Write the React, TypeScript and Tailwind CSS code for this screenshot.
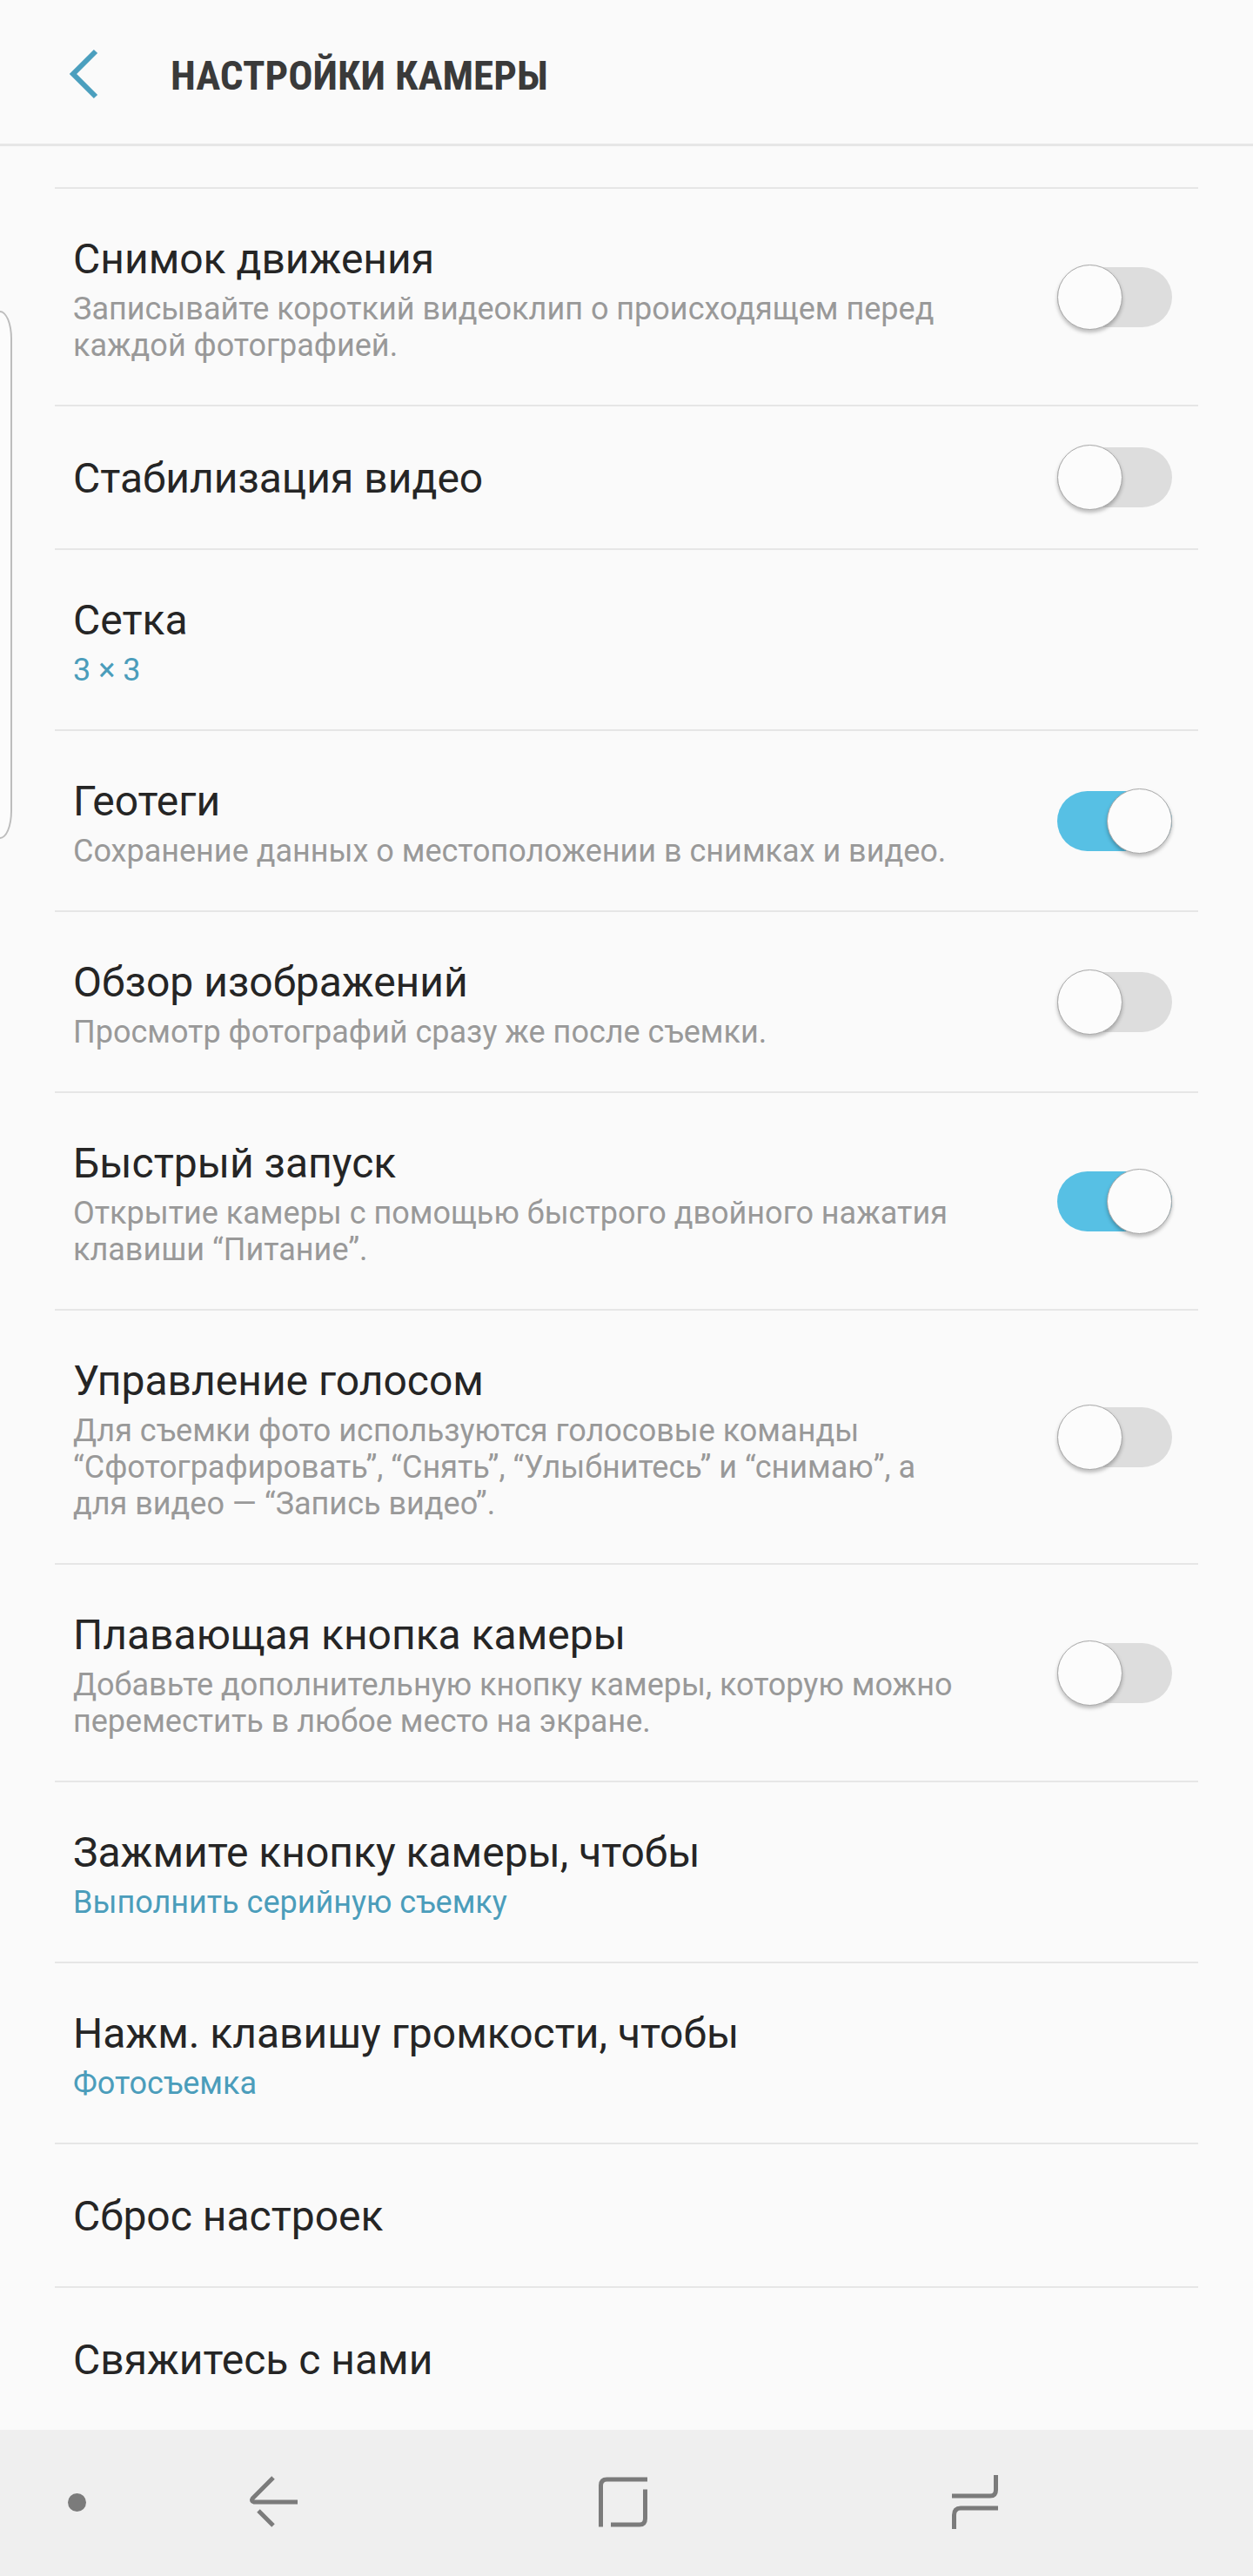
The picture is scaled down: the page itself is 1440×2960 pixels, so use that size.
import { useState } from 'react';
import clsx from 'clsx';

interface Setting {
  id: string;
  title: string;
  description?: string;
  value?: string;
  toggle?: boolean;
  enabled?: boolean;
}

const SETTINGS: Setting[] = [
  {
    id: 'motion-photo',
    title: 'Снимок движения',
    description: 'Записывайте короткий видеоклип о происходящем перед каждой фотографией.',
    toggle: true,
  },
  { id: 'stabilization', title: 'Стабилизация видео', toggle: true },
  { id: 'grid', title: 'Сетка', value: '3 × 3' },
  {
    id: 'geotags',
    title: 'Геотеги',
    description: 'Сохранение данных о местоположении в снимках и видео.',
    toggle: true,
    enabled: true,
  },
  {
    id: 'review',
    title: 'Обзор изображений',
    description: 'Просмотр фотографий сразу же после съемки.',
    toggle: true,
  },
  {
    id: 'quick-launch',
    title: 'Быстрый запуск',
    description: 'Открытие камеры с помощью быстрого двойного нажатия клавиши “Питание”.',
    toggle: true,
    enabled: true,
  },
  {
    id: 'voice',
    title: 'Управление голосом',
    description:
      'Для съемки фото используются голосовые команды “Сфотографировать”, “Снять”, “Улыбнитесь” и “снимаю”, а для видео — “Запись видео”.',
    toggle: true,
  },
  {
    id: 'floating-button',
    title: 'Плавающая кнопка камеры',
    description:
      'Добавьте дополнительную кнопку камеры, которую можно переместить в любое место на экране.',
    toggle: true,
  },
  { id: 'hold-button', title: 'Зажмите кнопку камеры, чтобы', value: 'Выполнить серийную съемку' },
  { id: 'volume-key', title: 'Нажм. клавишу громкости, чтобы', value: 'Фотосъемка' },
  { id: 'reset', title: 'Сброс настроек' },
  { id: 'contact', title: 'Свяжитесь с нами' },
];

function Switch({ id, checked, onChange }: { id: string; checked: boolean; onChange: () => void }) {
  return (
    <input
      id={id}
      type="checkbox"
      role="switch"
      checked={checked}
      onChange={onChange}
      className={clsx(
        'relative h-[75px] w-[132px] shrink-0 cursor-pointer appearance-none',
        'before:absolute before:inset-x-0 before:inset-y-[3px] before:rounded-full before:bg-[#dddddd] checked:before:bg-[#57c0e4]',
        'after:absolute after:left-0 after:top-0 after:size-[75px] after:rounded-full after:border after:border-[#a8a8a8] after:bg-[#fcfcfc] after:shadow-[0_3px_4px_rgba(0,0,0,0.25)]',
        'checked:after:left-auto checked:after:right-0'
      )}
    />
  );
}

function SettingText({ setting }: { setting: Setting }) {
  const { title, description, value } = setting;

  return (
    <span className="block min-w-0 flex-1">
      <span className="block text-5xl leading-[56px] text-[#252525]">{title}</span>
      {description && (
        <span className="mt-2 block text-4xl leading-[42px] text-[#999999]">{description}</span>
      )}
      {value && <span className="mt-2 block text-4xl leading-[42px] text-[#4b9dbb]">{value}</span>}
    </span>
  );
}

function SettingRow({ setting }: { setting: Setting }) {
  const [enabled, setEnabled] = useState(Boolean(setting.enabled));
  const hasDetails = setting.description || setting.value;
  const rowClass = clsx(
    'flex w-full items-center text-left',
    hasDetails ? 'pt-[53px] pb-[47px]' : 'pt-[55px] pb-[52px]'
  );

  if (!setting.toggle) {
    return (
      <button type="button" className={clsx(rowClass, 'px-[21px]')}>
        <SettingText setting={setting} />
      </button>
    );
  }

  return (
    <div className="flex items-center pr-[30px] pl-[21px]">
      <label htmlFor={setting.id} className={clsx(rowClass, 'min-w-0 flex-1 pr-[100px]')}>
        <SettingText setting={setting} />
      </label>
      <Switch id={setting.id} checked={enabled} onChange={() => setEnabled(!enabled)} />
    </div>
  );
}

function NavBar() {
  return (
    <nav className="flex h-[168px] bg-[#efefef] pr-[118px] pb-0.5 text-[#7b7b7b]">
      <button
        type="button"
        aria-label="Скрыть панель"
        className="flex w-[114px] items-center justify-center pl-[62px]"
      >
        <span className="size-[21px] rounded-full bg-current" />
      </button>
      <button type="button" aria-label="Назад" className="flex flex-1 items-center justify-center">
        <svg width="64" height="64" viewBox="0 0 64 64" fill="none" stroke="currentColor" strokeWidth="5">
          <path d="M31 4 L7.500 27.500 Q5 31 9 32 H59" />
          <path d="M14 42 L31 59" />
        </svg>
      </button>
      <button type="button" aria-label="Главный экран" className="flex flex-1 items-center justify-center">
        <svg width="64" height="64" viewBox="0 0 64 64" fill="none" stroke="currentColor" strokeWidth="5">
          <path d="M4.500 60.500 V13 Q4.500 6 11.500 6 H58" />
          <path d="M55.500 17.500 V51 Q55.500 58 49 58 H16" />
        </svg>
      </button>
      <button type="button" aria-label="Недавние" className="flex flex-1 items-center justify-center">
        <svg width="64" height="64" viewBox="0 0 64 64" fill="none" stroke="currentColor" strokeWidth="5">
          <path d="M5 25 H49 Q55.500 25 55.500 18 V1" />
          <path d="M58 39 H15 Q7.500 39 7.500 47 V63" />
        </svg>
      </button>
    </nav>
  );
}

export default function App() {
  return (
    <div className="relative flex min-h-screen flex-col bg-[#fafafa] font-['Roboto',sans-serif]">
      <header className="flex h-[168px] items-center border-b-3 border-[#e6e6e6] pl-[76px]">
        <button type="button" aria-label="Назад">
          <svg width="40" height="64" viewBox="0 0 40 64" fill="none" stroke="#4b9fbe" strokeWidth="6">
            <path d="M34 8 L8 34 L34 60" />
          </svg>
        </button>
        <h1 className="ml-20 pt-2 font-['Roboto_Condensed','Roboto',sans-serif] text-[47px] leading-[56px] font-bold text-[#3a3a3a]">
          НАСТРОЙКИ КАМЕРЫ
        </h1>
      </header>

      <main className="mt-[47px] flex-1 px-[63px]">
        <ul>
          {SETTINGS.map((setting) => (
            <li key={setting.id} className="border-t-2 border-[#e6e6e6]">
              <SettingRow setting={setting} />
            </li>
          ))}
        </ul>
      </main>

      <NavBar />

      {/* Ручка боковой панели */}
      <div className="absolute top-[357px] -left-1 h-[607px] w-[18px] rounded-r-[14px_32px] border-2 border-[#bdbdbd] bg-[#fcfcfc]" />
    </div>
  );
}
